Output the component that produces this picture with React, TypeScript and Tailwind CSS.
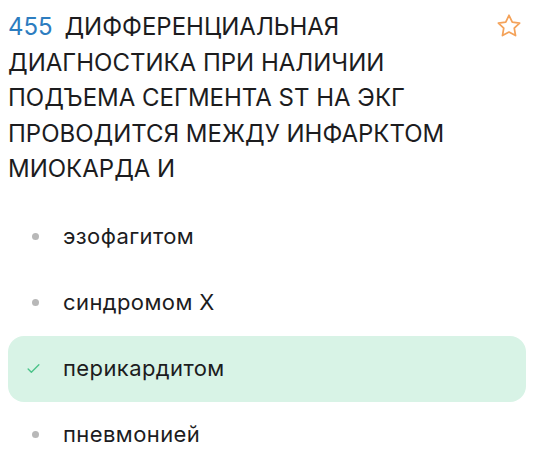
import React from "react";

const options = [
  { text: "эзофагитом", correct: false },
  { text: "синдромом X", correct: false },
  { text: "перикардитом", correct: true },
  { text: "пневмонией", correct: false },
];

export default function App() {
  return (
    <div className="w-[534px] h-[462px] bg-white text-[#1c1c1e] overflow-hidden" style={{ fontFamily: "Inter, 'Noto Sans', sans-serif" }}>
      <div className="flex items-start pl-[8px] pr-[11px] pt-[9px]">
        <p className="flex-1 text-[24px] leading-[35.5px] tracking-[0px] pr-[10px]">
          <span className="text-[#2d7dc0] mr-[5px]">455</span> ДИФФЕРЕНЦИАЛЬНАЯ ДИАГНОСТИКА ПРИ НАЛИЧИИ ПОДЪЕМА СЕГМЕНТА ST НА ЭКГ ПРОВОДИТСЯ МЕЖДУ ИНФАРКТОМ МИОКАРДА И
        </p>
        <svg width="28" height="28" viewBox="0 0 24 24" fill="none" stroke="#f4a259" strokeWidth="1.5" strokeLinejoin="round" strokeLinecap="round" className="mt-[3px]">
          <path d="M12 2.8l2.8 5.8 6.3.9-4.6 4.4 1.1 6.3L12 17.2l-5.6 3 1.1-6.3-4.6-4.4 6.3-.9z" />
        </svg>
      </div>
      <div className="flex flex-col mt-[17px] px-[8px]">
        {options.map((o) => (
          <div
            key={o.text}
            className={`flex items-center h-[66px] rounded-[16px] ${o.correct ? "bg-[#d8f3e6]" : ""}`}
          >
            <div className="w-[55px] flex justify-center">
              {o.correct ? (
                <svg width="15" height="15" viewBox="0 0 14 14" fill="none" stroke="#4cc38a" strokeWidth="1.3" strokeLinecap="round" strokeLinejoin="round" className="-ml-[4px]">
                  <path d="M2 7.5l3 3 7-7" />
                </svg>
              ) : (
                <div className="w-[7px] h-[7px] rounded-full bg-[#b8b8b8]" />
              )}
            </div>
            <span className="text-[22px] tracking-[0.4px]">{o.text}</span>
          </div>
        ))}
      </div>
    </div>
  );
}
